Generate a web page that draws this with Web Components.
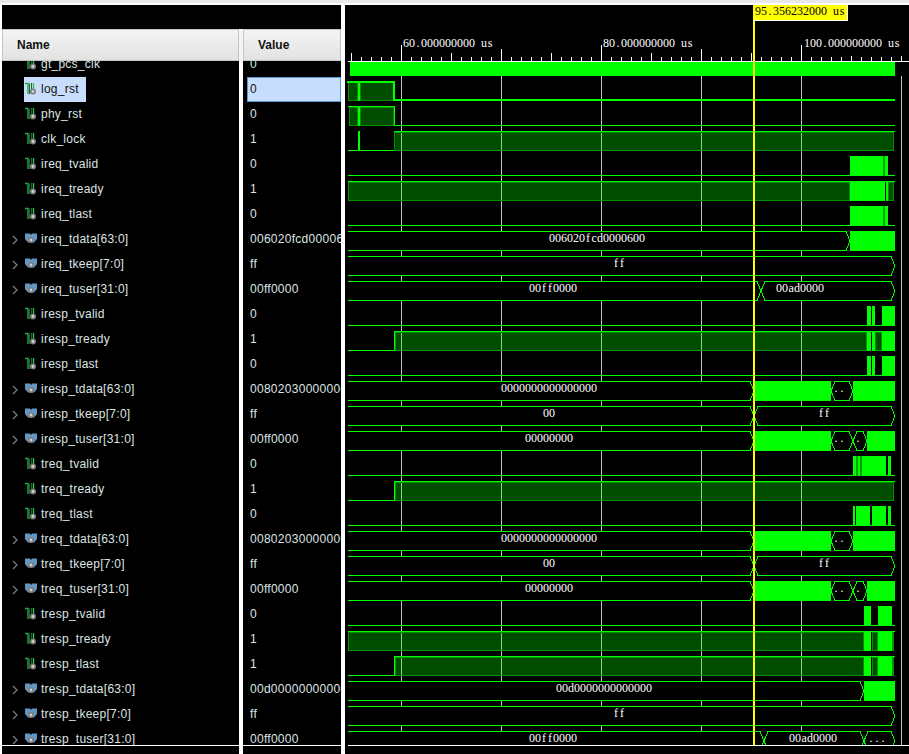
<!DOCTYPE html>
<html>
<head>
<meta charset="utf-8">
<style>
html, body { margin: 0; background: #fff; overflow: hidden; }
</style>
</head>
<body>
<wave-window>
    <signal-pane slot="signals">
        <signal-row name="gt_pcs_clk">0</signal-row>
        <signal-row name="log_rst" selected>0</signal-row>
        <signal-row name="phy_rst">0</signal-row>
        <signal-row name="clk_lock">1</signal-row>
        <signal-row name="ireq_tvalid">0</signal-row>
        <signal-row name="ireq_tready">1</signal-row>
        <signal-row name="ireq_tlast">0</signal-row>
        <signal-row bus name="ireq_tdata[63:0]">006020fcd0000600</signal-row>
        <signal-row bus name="ireq_tkeep[7:0]">ff</signal-row>
        <signal-row bus name="ireq_tuser[31:0]">00ff0000</signal-row>
        <signal-row name="iresp_tvalid">0</signal-row>
        <signal-row name="iresp_tready">1</signal-row>
        <signal-row name="iresp_tlast">0</signal-row>
        <signal-row bus name="iresp_tdata[63:0]">0080203000000000</signal-row>
        <signal-row bus name="iresp_tkeep[7:0]">ff</signal-row>
        <signal-row bus name="iresp_tuser[31:0]">00ff0000</signal-row>
        <signal-row name="treq_tvalid">0</signal-row>
        <signal-row name="treq_tready">1</signal-row>
        <signal-row name="treq_tlast">0</signal-row>
        <signal-row bus name="treq_tdata[63:0]">0080203000000000</signal-row>
        <signal-row bus name="treq_tkeep[7:0]">ff</signal-row>
        <signal-row bus name="treq_tuser[31:0]">00ff0000</signal-row>
        <signal-row name="tresp_tvalid">0</signal-row>
        <signal-row name="tresp_tready">1</signal-row>
        <signal-row name="tresp_tlast">1</signal-row>
        <signal-row bus name="tresp_tdata[63:0]">00d0000000000000</signal-row>
        <signal-row bus name="tresp_tkeep[7:0]">ff</signal-row>
        <signal-row bus name="tresp_tuser[31:0]">00ff0000</signal-row>
    </signal-pane>
    <wave-view slot="waves"></wave-view>
</wave-window>

<script>
const windowTemplate = document.createElement('template');
windowTemplate.innerHTML = `
<style>
:host {
    display: grid;
    grid-template-columns: 339px 4px 564px;
    box-sizing: border-box;
    width: 909px;
    height: 754px;
    padding: 2px 0 0 2px;
    border-top: 3px solid #e8e8e8;
    background: #fff;
}
</style>
<slot name="signals"></slot>
<div></div>
<slot name="waves"></slot>
`;

class WaveWindow extends HTMLElement {
    constructor() {
        super();
        this.attachShadow({ mode: 'open' });
        this.shadowRoot.appendChild(windowTemplate.content.cloneNode(true));
    }
}

const paneTemplate = document.createElement('template');
paneTemplate.innerHTML = `
<style>
:host {
    display: flex;
    flex-direction: column;
    height: 749px;
    font: 12px "Liberation Sans", Arial, sans-serif;
}
#top { height: 24px; background: #000; flex: none; }
#head {
    display: grid;
    grid-template-columns: 237px 98px;
    column-gap: 4px;
    height: 32px;
    flex: none;
    background: #f4f4f4;
}
.cell {
    display: flex;
    align-items: center;
    box-sizing: border-box;
    border: 1px solid #c4c4c4;
    background: linear-gradient(#f4f4f4, #e2e2e2);
    font-weight: bold;
    color: #111;
}
#name { padding-left: 14px; }
#value { padding-left: 14px; }
#list { height: 684px; overflow: hidden; flex: none; background: #000; }
#rows { margin-top: -9px; }
#foot {
    display: grid;
    grid-template-columns: 237px 98px;
    column-gap: 4px;
    flex: 1;
    border-top: 1px solid #fff;
}
#foot div { background: #000; }
</style>
<div id="top"></div>
<div id="head">
    <div class="cell" id="name">Name</div>
    <div class="cell" id="value">Value</div>
</div>
<div id="list"><div id="rows"><slot></slot></div></div>
<div id="foot"><div></div><div></div></div>
`;

class SignalPane extends HTMLElement {
    constructor() {
        super();
        this.attachShadow({ mode: 'open' });
        this.shadowRoot.appendChild(paneTemplate.content.cloneNode(true));
    }
}

const scalarIcon = `
<svg width="12" height="13" viewBox="0 0 12 13">
    <path d="M0 1.5H3V12" fill="none" stroke="#22a844" stroke-width="1.4"/>
    <path d="M4.5 1.5V12" fill="none" stroke="#176a2c" stroke-width="1"/>
    <path d="M8.5 1V7" fill="none" stroke="#2fc058" stroke-width="1.4"/>
    <path d="M6.5 1V7" fill="none" stroke="#176a2c" stroke-width="1"/>
    <circle cx="8" cy="9.5" r="2.2" fill="#d0d0d0" stroke="#7c7c7c" stroke-width="1.6"/>
</svg>`;

const busIcon = `
<svg width="12" height="13" viewBox="0 0 12 13">
    <path d="M0 1.5H5L6 3L7 1.5H12V7L9 10.5H3L0 7Z" fill="#6496c4"/>
    <circle cx="6" cy="8" r="2.2" fill="#d0d0d0" stroke="#7c7c7c" stroke-width="1.6"/>
</svg>`;

const rowTemplate = document.createElement('template');
rowTemplate.innerHTML = `
<style>
:host {
    display: grid;
    grid-template-columns: 237px 98px;
    column-gap: 4px;
    height: 25px;
    background: #fff;
    color: #dde4e4;
    font: 12px "Liberation Sans", Arial, sans-serif;
}
#name, #value { background: #000; display: flex; align-items: stretch; overflow: hidden; white-space: nowrap; }
#arrow { width: 22px; flex: none; display: flex; align-items: center; justify-content: flex-end; padding-right: 6px; box-sizing: border-box; }
#label { display: flex; align-items: center; padding: 0 7px 2px 1px; letter-spacing: 0.25px; }
#icon { width: 16px; flex: none; display: flex; }
#val { flex: 1; display: flex; align-items: center; margin-left: 4px; padding: 0 0 2px 2px; border: 1px solid transparent; letter-spacing: 0.28px; }
:host([selected]) #label { background: #c8dcfc; color: #111; }
:host([selected]) #val { background: #c8dcfc; border-color: #5a9ad8; color: #111; }
</style>
<div id="name">
    <div id="arrow"></div>
    <div id="label"><div id="icon"></div><span id="text"></span></div>
</div>
<div id="value"><div id="val"><slot></slot></div></div>
`;

class SignalRow extends HTMLElement {
    constructor() {
        super();
        this.attachShadow({ mode: 'open' });
        this.shadowRoot.appendChild(rowTemplate.content.cloneNode(true));
    }

    connectedCallback() {
        const isBus = this.hasAttribute('bus');
        this.shadowRoot.querySelector('#text').textContent = this.getAttribute('name');
        this.shadowRoot.querySelector('#icon').innerHTML = isBus ? busIcon : scalarIcon;
        if (isBus) {
            this.shadowRoot.querySelector('#arrow').innerHTML =
                '<svg width="6" height="10" viewBox="0 0 6 10"><path d="M1 1L5 5L1 9" fill="none" stroke="#808080" stroke-width="1.2"/></svg>';
        }
    }
}

const GREEN = '#00ff00';

// bit rows: h = solid bars, d = dark (held high) spans, t = top edge span, line = low line span
// bus rows: b = segments, [from, to, text, textCenter] or [from, to] for a solid block
const waveRows = [
    { top: 62, solid: [350, 895] },
    { top: 81, thick: true, line: [395, 895], d: [[348, 358], [360, 394]], h: [[358, 360], [393, 395]], t: [347, 395] },
    { top: 106, line: [394, 895], d: [[349, 358], [360, 394]], h: [[358, 360], [394, 395]], t: [348, 395] },
    { top: 131, line: [348, 394], d: [[394, 894]], h: [[358, 360]], t: [394, 895] },
    { top: 156, line: [348, 895], h: [[850, 883], [885, 888]], m: [[883, 885]] },
    { top: 181, d: [[348, 850], [888, 894]], h: [[850, 885], [886, 888]], t: [348, 895] },
    { top: 206, line: [348, 895], h: [[850, 883], [885, 888]], m: [[883, 885]] },
    { top: 231, b: [[348, 850, '006020fcd0000600', 597], [850, 895]] },
    { top: 256, b: [[348, 895, 'ff', 619]] },
    { top: 281, b: [[348, 761, '00ff0000', 553], [761, 895, '00ad0000', 800]] },
    { top: 306, line: [348, 895], h: [[867, 871], [872, 875], [882, 895]] },
    { top: 331, line: [348, 394], d: [[395, 867], [875, 882]], h: [[394, 395], [867, 871], [872, 875], [882, 895]], t: [394, 895] },
    { top: 356, line: [348, 895], h: [[867, 871], [872, 875], [882, 895]] },
    { top: 381, b: [[348, 754, '0000000000000000', 549], [754, 831], [831, 853, '..', 839], [853, 895]] },
    { top: 406, b: [[348, 754, '00', 549], [754, 895, 'ff', 824]] },
    { top: 431, b: [[348, 754, '00000000', 549], [754, 831], [831, 853, '..', 839], [853, 867, '.', 858], [867, 895]] },
    { top: 456, line: [348, 895], h: [[853, 856], [858, 860], [862, 886], [888, 891]], m: [[856, 858], [860, 862]] },
    { top: 481, line: [348, 394], d: [[395, 894]], h: [[394, 395]], t: [394, 895] },
    { top: 506, line: [348, 895], h: [[853, 855], [856, 870], [872, 886], [888, 891]] },
    { top: 531, b: [[348, 754, '0000000000000000', 549], [754, 831], [831, 853, '..', 839], [853, 895]] },
    { top: 556, b: [[348, 754, '00', 549], [754, 895, 'ff', 824]] },
    { top: 581, b: [[348, 754, '00000000', 549], [754, 831], [831, 853, '..', 839], [853, 867, '.', 858], [867, 895]] },
    { top: 606, line: [348, 895], h: [[864, 871], [878, 892]] },
    { top: 631, d: [[348, 864], [872, 878], [892, 894]], h: [[864, 871], [878, 892]], t: [348, 895] },
    { top: 656, line: [348, 394], d: [[395, 864], [872, 878], [892, 894]], h: [[394, 395], [864, 871], [878, 892]], t: [394, 895] },
    { top: 681, b: [[348, 864, '00d0000000000000', 604], [864, 895]] },
    { top: 706, b: [[348, 895, 'ff', 619]] },
    { top: 731, b: [[348, 764, '00ff0000', 553], [764, 864, '00ad0000', 813], [864, 895, '...', 877]] },
];

// Liberation Serif is narrower than the 6px cell for these, so they get centred in it
const narrowGlyphs = { f: 1, '.': 1.5, s: 0.7, a: 0.4, c: 0.4 };

const waveTemplate = document.createElement('template');
waveTemplate.innerHTML = `
<style>
:host { display: block; width: 564px; height: 749px; background: #000; overflow: hidden; }
svg { display: block; opacity: 0.999; }
text { font: 12px "Liberation Serif", "Times New Roman", serif; fill: #fff; white-space: pre; }
</style>
<svg width="564" height="749" viewBox="345 5 564 749" shape-rendering="crispEdges"></svg>
`;

class WaveView extends HTMLElement {
    constructor() {
        super();
        this.attachShadow({ mode: 'open' });
        this.shadowRoot.appendChild(waveTemplate.content.cloneNode(true));
    }

    rect(x1, y1, x2, y2, fill) {
        return `<rect x="${x1}" y="${y1}" width="${x2 - x1}" height="${y2 - y1}" fill="${fill}"/>`;
    }

    text(x, y, str, fill = '#fff') {
        const xs = [...str].map((ch, i) => x + i * 6 + (narrowGlyphs[ch] || 0));
        return `<text x="${xs.join(' ')}" y="${y}" style="fill:${fill}">${str}</text>`;
    }

    ruler() {
        let out = this.rect(348, 61, 909, 62, '#fff');
        for (let x = 351; x < 909; x += 10) {
            let h = 4;
            if (x % 50 === 1) h = 8;
            if (x % 100 === 1) h = 12;
            if (x === 401 || x === 601 || x === 801) h = 16;
            if (x === 851 || x === 901) h = 5;
            out += this.rect(x, 61 - h, x + 1, 61, '#fff');
        }
        out += this.text(403, 47, '60.000000000 us');
        out += this.text(603, 47, '80.000000000 us');
        out += this.text(804, 47, '100.000000000 us');
        return out;
    }

    grid() {
        let out = '';
        for (let x = 401; x < 909; x += 100) {
            out += this.rect(x, 76, x + 1, 745, '#c0c0c0');
        }
        return out;
    }

    bitRow(row) {
        const top = row.top;
        let out = '';
        if (row.solid) return this.rect(row.solid[0], top, row.solid[1], top + 14, GREEN);
        const lineH = row.thick ? 2 : 1;
        const lowY = row.thick ? top + 18 : top + 19;
        (row.d || []).forEach(([a, b]) => {
            out += `<rect x="${a + 0.5}" y="${top + 1.5}" width="${b - a - 1}" height="18" fill="#00ff00" fill-opacity="0.3" stroke="#009000"/>`;
        });
        if (row.line) out += this.rect(row.line[0], lowY, row.line[1], lowY + lineH, GREEN);
        if (row.t) out += this.rect(row.t[0], top, row.t[1], top + lineH, GREEN);
        (row.m || []).forEach(([a, b]) => { out += this.rect(a, top, b, top + 20, '#00a000'); });
        (row.h || []).forEach(([a, b]) => { out += this.rect(a, top, b, top + 20, GREEN); });
        return out;
    }

    busRow(row) {
        const t = row.top + 0.5;
        const b = row.top + 19.5;
        const mid = row.top + 10;
        let out = '';
        row.b.forEach(([from, to, label, center], i) => {
            if (label === undefined) {
                out += this.rect(from, row.top, to, row.top + 20, GREEN);
                return;
            }
            const open = i === 0;
            const left = open
                ? `${from},${t} `
                : `${from},${mid} ${from + 4},${t} `;
            const right = `${to - 4},${t} ${to},${mid} ${to - 4},${b} `;
            const back = open ? `${from},${b}` : `${from + 4},${b} ${from},${mid}`;
            out += `<polygon points="${left}${right}${back}" fill="#000" stroke="none"/>`;
            out += `<polyline points="${left}${right}${back}" fill="none" stroke="${GREEN}"/>`;
            out += this.text(center - label.length * 3, row.top + 11, label);
        });
        return out;
    }

    connectedCallback() {
        let out = this.ruler() + this.grid();
        waveRows.forEach(row => {
            out += row.b ? this.busRow(row) : this.bitRow(row);
        });
        // the list is cut off at the bottom rule
        out += this.rect(345, 745, 909, 754, '#000');
        out += this.rect(348, 745, 909, 746, '#fff');
        // cursor
        out += this.rect(753, 20, 755, 745, '#ffff00');
        out += this.rect(753, 5, 848, 21, '#fff');
        out += this.rect(753, 5, 847, 20, '#ffff00');
        out += this.text(755, 15, '95.356232000 us', '#000');
        this.shadowRoot.querySelector('svg').innerHTML = out;
    }
}

customElements.define('wave-window', WaveWindow);
customElements.define('signal-pane', SignalPane);
customElements.define('signal-row', SignalRow);
customElements.define('wave-view', WaveView);
</script>
</body>
</html>
